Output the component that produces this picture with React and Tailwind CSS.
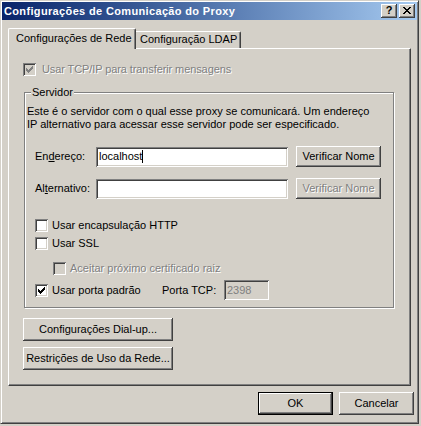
const raised = 'shadow-[inset_-1px_-1px_0_#404040,inset_1px_1px_0_#ffffff,inset_-2px_-2px_0_#808080]'
const sunken = 'shadow-[inset_1px_1px_0_#808080,inset_-1px_-1px_0_#ffffff,inset_2px_2px_0_#404040,inset_-2px_-2px_0_#d4d0c8]'
const grayText = 'text-[#808080] [text-shadow:1px_1px_0_#ffffff]'

function Check({ color = '#000' }) {
  // 7x7 classic check mark, column by column
  const cols = [[0, 2], [1, 3], [2, 4], [3, 3], [4, 2], [5, 1], [6, 0]]
  return (
    <svg width="7" height="7" viewBox="0 0 7 7" shapeRendering="crispEdges">
      <path d={cols.map(([x, y]) => `M${x} ${y}h1v3h-1z`).join('')} fill={color} />
    </svg>
  )
}

function Checkbox({ checked, disabled }) {
  return (
    <div className={`w-[13px] h-[13px] shrink-0 flex items-center justify-center ${sunken} ${disabled ? 'bg-[#d4d0c8]' : 'bg-white'}`}>
      {checked && <Check color={disabled ? '#808080' : '#000'} />}
    </div>
  )
}

function Button({ children, disabled, isDefault, className = '' }) {
  return (
    <div
      className={`flex items-center justify-center bg-[#d4d0c8] ${isDefault ? 'border border-black' : ''} ${raised} ${disabled ? grayText : 'text-black'} ${className}`}
    >
      {children}
    </div>
  )
}

function Field({ value, disabled, cursor, className = '' }) {
  return (
    <div className={`flex items-center pl-[3px] ${sunken} ${disabled ? 'bg-[#d4d0c8] text-[#808080]' : 'bg-white text-black'} ${className}`}>
      <span>{value}</span>
      {cursor && <span className="w-px h-[13px] bg-black" />}
    </div>
  )
}

function CloseGlyph() {
  const rows = ['xx....xx', '.xx..xx.', '..xxxx..', '...xx...', '..xxxx..', '.xx..xx.', 'xx....xx']
  let d = ''
  rows.forEach((r, y) => r.split('').forEach((c, x) => { if (c === 'x') d += `M${x} ${y}h1v1h-1z` }))
  return (
    <svg width="8" height="7" viewBox="0 0 8 7" shapeRendering="crispEdges">
      <path d={d} fill="#000" />
    </svg>
  )
}

export default function App() {
  return (
    <div className="w-[421px] h-[426px] bg-[#d4d0c8] font-['Liberation_Sans',Arial,sans-serif] text-[11px] leading-[13px] text-black select-none">
      {/* ── Window frame ── */}
      <div className="w-[419px] h-[424px] p-px border border-t-[#d4d0c8] border-l-[#d4d0c8] border-r-[#404040] border-b-[#404040] shadow-[inset_1px_1px_0_#ffffff,inset_-1px_-1px_0_#808080] flex flex-col">

        {/* Title bar */}
        <div className="h-[18px] shrink-0 flex items-center pl-[2px] pr-[2px] bg-gradient-to-r from-[#0a246a] to-[#a6caf0]">
          <span className="flex-1 text-white font-bold text-[11px] tracking-[0.35px]">Configurações de Comunicação do Proxy</span>
          <div className={`w-[16px] h-[14px] bg-[#d4d0c8] flex items-center justify-center font-bold text-[11px] leading-none pb-px ${raised}`}>?</div>
          <div className={`ml-[2px] w-[16px] h-[14px] bg-[#d4d0c8] flex items-center justify-center pb-px ${raised}`}>
            <CloseGlyph />
          </div>
        </div>

        {/* Tabs */}
        <div className="mt-[8px] ml-[6px] h-[20px] flex items-end relative z-10">
          <div className="w-[128px] h-[21px] -mb-px bg-[#d4d0c8] rounded-t-[2px] border-t border-l border-white border-r border-r-[#404040] shadow-[inset_-1px_0_0_#808080] flex items-center pl-[7px] pb-px">
            Configurações de Rede
          </div>
          <div className="w-[105px] h-[17px] bg-[#d4d0c8] rounded-tr-[2px] border-t border-white border-r border-r-[#404040] shadow-[inset_-1px_0_0_#808080] flex items-center pl-[4px] pb-px">
            Configuração LDAP
          </div>
        </div>

        {/* Tab panel */}
        <div className="ml-[6px] w-[403px] h-[338px] shrink-0 border border-white border-r-[#404040] border-b-[#404040] shadow-[inset_-1px_-1px_0_#808080] flex flex-col">
          <div className="mt-[14px] ml-[14px] flex items-center gap-[6px]">
            <Checkbox checked disabled />
            <span className={`${grayText} tracking-[-0.1px]`}>Usar TCP/IP para transferir mensagens</span>
          </div>

          {/* Servidor group */}
          <div className="relative mt-[16px] ml-[15px] w-[370px] h-[216px] shrink-0 border border-[#808080] shadow-[inset_1px_1px_0_#ffffff,1px_1px_0_#ffffff] flex flex-col">
            <span className="absolute left-[6px] -top-[7px] px-px bg-[#d4d0c8]">Servidor</span>

            <p className="pt-[12px] pl-[2px]">
              Este é o servidor com o qual esse proxy se comunicará. Um endereço<br />
              IP alternativo para acessar esse servidor pode ser especificado.
            </p>

            <div className="mt-[15px] ml-[10px] h-[21px] flex items-center">
              <span className="w-[61px]">En<u>d</u>ereço:</span>
              <Field value="localhost" cursor className="w-[192px] h-[20px]" />
              <Button className="ml-[8px] w-[85px] h-[21px]">Verificar Nome</Button>
            </div>

            <div className="mt-[11px] ml-[10px] h-[21px] flex items-center">
              <span className="w-[61px]">Al<u>t</u>ernativo:</span>
              <Field value="" className="w-[192px] h-[20px]" />
              <Button disabled className="ml-[8px] w-[85px] h-[21px]">Verificar Nome</Button>
            </div>

            <div className="mt-[20px] ml-[10px] flex items-center gap-[4px]">
              <Checkbox />
              <span>Usar encapsulação HTTP</span>
            </div>
            <div className="mt-[5px] ml-[10px] flex items-center gap-[4px]">
              <Checkbox />
              <span>Usar SSL</span>
            </div>
            <div className="mt-[12px] ml-[28px] flex items-center gap-[4px]">
              <Checkbox disabled />
              <span className={grayText}>Aceitar próximo certificado raiz</span>
            </div>
            <div className="mt-[5px] ml-[10px] h-[20px] flex items-center">
              <Checkbox checked />
              <span className="ml-[4px] w-[110px]">Usar porta padrão</span>
              <span className="w-[62px]">Porta TCP:</span>
              <Field value="2398" disabled className="w-[45px] h-[20px]" />
            </div>
          </div>

          <Button className="mt-[10px] ml-[14px] w-[150px] h-[23px]">Configurações Dial-up...</Button>
          <Button className="mt-[6px] ml-[14px] w-[150px] h-[23px]">Restrições de Uso da Rede...</Button>
        </div>

        {/* Dialog buttons */}
        <div className="mt-[6px] pr-[3px] flex justify-end gap-[6px]">
          <Button isDefault className="w-[75px] h-[23px]">OK</Button>
          <Button className="w-[75px] h-[23px]">Cancelar</Button>
        </div>
      </div>
    </div>
  )
}
